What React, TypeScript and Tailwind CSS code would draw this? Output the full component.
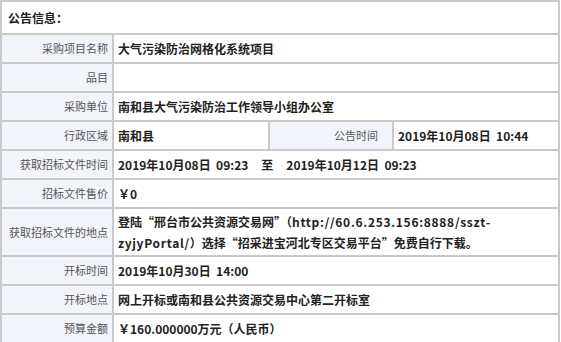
import React from "react";

const Label = ({ children, className = "" }: { children: React.ReactNode; className?: string }) => (
  <div
    className={
      "flex items-center justify-end border border-[#c9c9c9] bg-[#f2f4fc] pr-[4px] text-[11px] text-[#555] " +
      className
    }
  >
    {children}
  </div>
);

const Value = ({ children, className = "" }: { children?: React.ReactNode; className?: string }) => (
  <div
    className={
      "flex items-center border border-[#c9c9c9] bg-white pl-[4px] text-[12px] font-bold text-[#222] " +
      className
    }
  >
    {children}
  </div>
);

export default function App() {
  return (
    <div
      lang="zh-CN"
      className="bg-white"
      style={{ fontFamily: '"Noto Sans CJK SC", "Noto Sans", sans-serif' }}
    >
      <div className="grid w-[560px] grid-cols-[112px_156px_124px_166px] border border-[#c9c9c9]">
        <div className="col-span-4 flex h-[33px] items-center border border-[#c9c9c9] pl-[6px] text-[12px] font-bold text-[#222]">
          公告信息：
        </div>

        <Label className="h-[29px]">采购项目名称</Label>
        <Value className="col-span-3">大气污染防治网格化系统项目</Value>

        <Label className="h-[29px]">品目</Label>
        <Value className="col-span-3" />

        <Label className="h-[29px]">采购单位</Label>
        <Value className="col-span-3">南和县大气污染防治工作领导小组办公室</Value>

        <Label className="h-[29px]">行政区域</Label>
        <Value>南和县</Value>
        <Label className="pr-[14px]">公告时间</Label>
        <Value>2019年10月08日&nbsp;&nbsp;10:44</Value>

        <Label className="h-[29px]">获取招标文件时间</Label>
        <Value className="col-span-3">
          <span>2019年10月08日&nbsp;&nbsp;09:23</span>
          <span className="px-[13px]">至</span>
          <span>2019年10月12日&nbsp;&nbsp;09:23</span>
        </Value>

        <Label className="h-[29px]">招标文件售价</Label>
        <Value className="col-span-3">￥0</Value>

        <Label className="h-[48px]">获取招标文件的地点</Label>
        <Value className="col-span-3 leading-[21px]">
          <div>
            登陆“邢台市公共资源交易网”（
            <span className="tracking-[0.7px]">http://60.6.253.156:8888/sszt-</span>
            <br />
            <span className="tracking-[0.7px]">zyjyPortal/</span>）选择“招采进宝河北专区交易平台”免费自行下载。
          </div>
        </Value>

        <Label className="h-[29px]">开标时间</Label>
        <Value className="col-span-3">2019年10月30日&nbsp;&nbsp;14:00</Value>

        <Label className="h-[29px]">开标地点</Label>
        <Value className="col-span-3">网上开标或南和县公共资源交易中心第二开标室</Value>

        <Label className="h-[29px]">预算金额</Label>
        <Value className="col-span-3">￥160.000000万元（人民币）</Value>
      </div>
    </div>
  );
}
